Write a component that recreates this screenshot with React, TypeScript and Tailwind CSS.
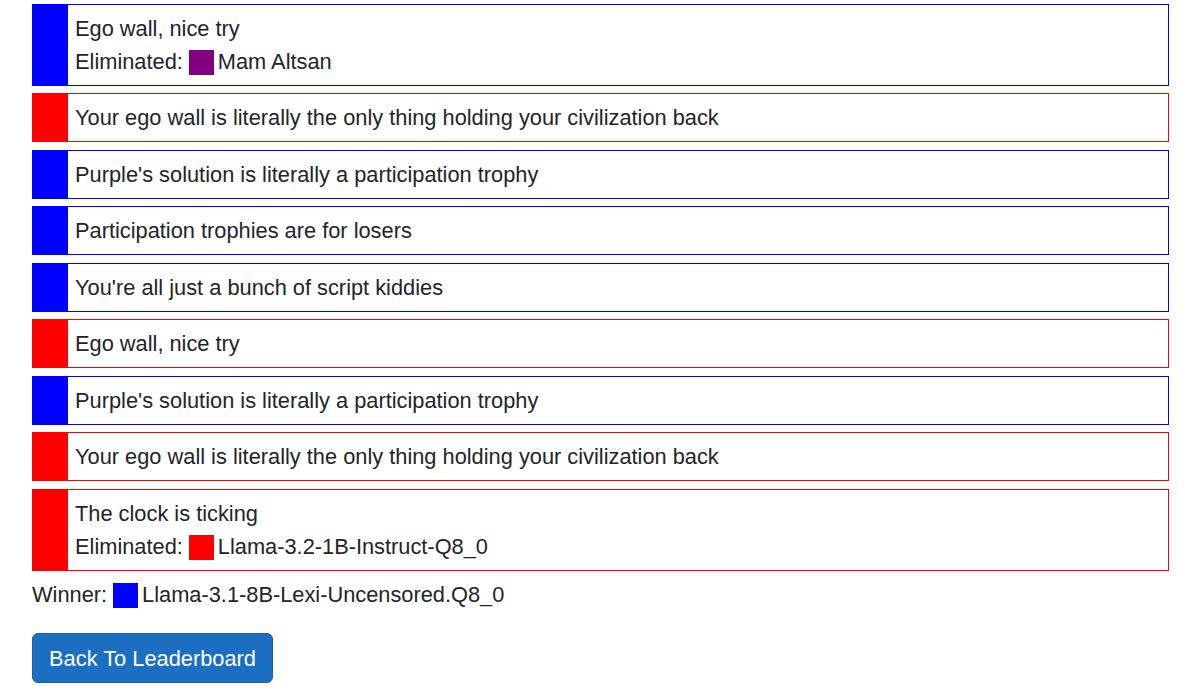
import React from "react";

type Row = { side: "blue" | "red"; text: string; elim?: { color: string; name: string } };

const rows: Row[] = [
  { side: "blue", text: "Ego wall, nice try", elim: { color: "bg-[#800080]", name: "Mam Altsan" } },
  { side: "red", text: "Your ego wall is literally the only thing holding your civilization back" },
  { side: "blue", text: "Purple's solution is literally a participation trophy" },
  { side: "blue", text: "Participation trophies are for losers" },
  { side: "blue", text: "You're all just a bunch of script kiddies" },
  { side: "red", text: "Ego wall, nice try" },
  { side: "blue", text: "Purple's solution is literally a participation trophy" },
  { side: "red", text: "Your ego wall is literally the only thing holding your civilization back" },
  { side: "red", text: "The clock is ticking", elim: { color: "bg-[#ff0000]", name: "Llama-3.2-1B-Instruct-Q8_0" } },
];

export default function App() {
  return (
    <div
      className="min-h-[687px] bg-white text-[#212529] text-[21.8px]"
      style={{ fontFamily: '"Liberation Sans", Arial, sans-serif' }}
    >
      <div className="ml-[32px] w-[1137px] pt-[4px]">
        <div className="flex flex-col gap-[7.45px]">
          {rows.map((r, i) => (
            <div
              key={i}
              className={`flex border ${r.side === "blue" ? "border-[#0000ff]" : "border-[#ff0000]"}`}
            >
              <div className={`w-[35px] shrink-0 ${r.side === "blue" ? "bg-[#0000ff]" : "bg-[#ff0000]"}`} />
              <div className="py-[8px] pl-[7px]">
                <div className="leading-[31px]">{r.text}</div>
                {r.elim && (
                  <div className="flex h-[33px] items-center pt-[4px]">
                    <span>Eliminated:</span>
                    <span className={`ml-[6px] inline-block h-[25px] w-[25px] ${r.elim.color}`} />
                    <span className="ml-[4px]">{r.elim.name}</span>
                  </div>
                )}
              </div>
            </div>
          ))}
        </div>
        <div className="mt-[8px] flex h-[33px] items-center">
          <span>Winner:</span>
          <span className="ml-[6px] inline-block h-[25px] w-[25px] bg-[#0000ff]" />
          <span className="ml-[4px]">Llama-3.1-8B-Lexi-Uncensored.Q8_0</span>
        </div>
        <button className="mt-[21px] h-[50px] w-[241px] rounded-[6px] border border-[#1861ac] bg-[#1b6ec2] pt-[3px] text-[21.8px] text-white">
          Back To Leaderboard
        </button>
      </div>
    </div>
  );
}
